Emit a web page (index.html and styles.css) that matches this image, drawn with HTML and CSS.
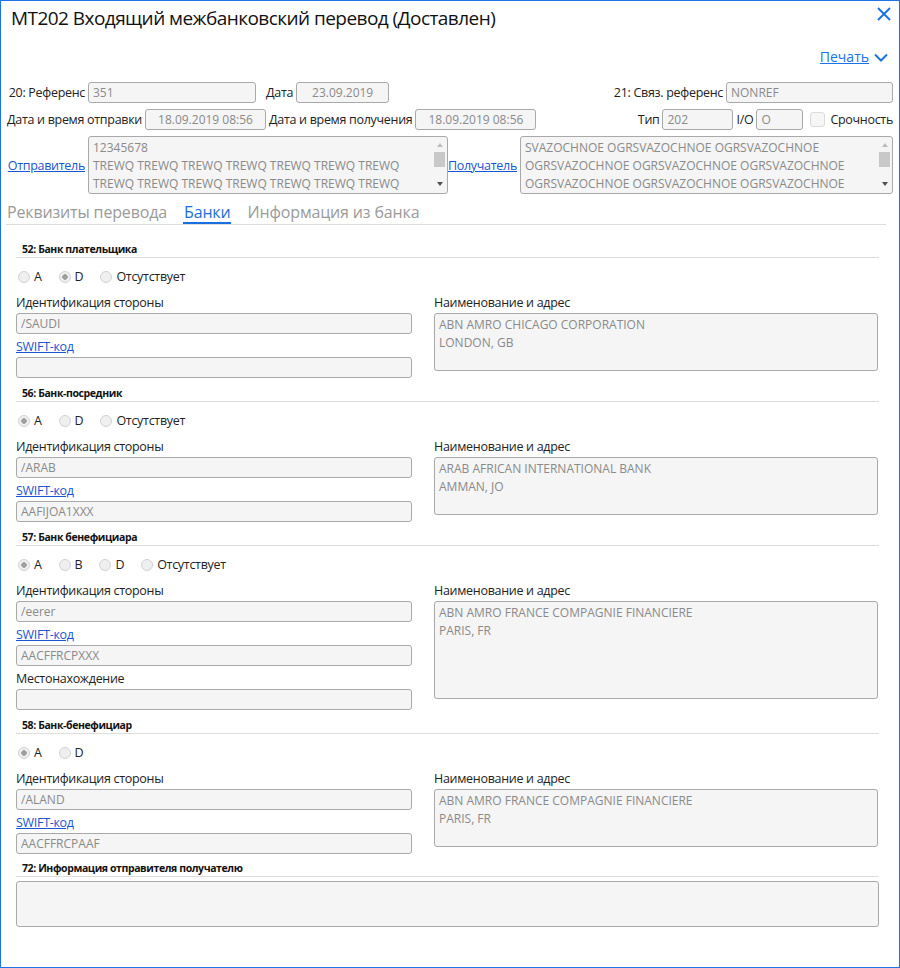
FILE: index.html
```html
<!DOCTYPE html>
<html lang="ru">
<head>
<meta charset="utf-8">
<title>MT202</title>
<link rel="stylesheet" href="styles.css">
</head>
<body>
<div class="window">
  <header class="titlebar">
    <h1 class="title">МТ202 Входящий межбанковский перевод (Доставлен)</h1>
    <button class="close" type="button" aria-label="Закрыть">
      <svg width="14" height="14" viewBox="0 0 14 14"><path d="M1 1 L13 13 M13 1 L1 13" stroke="#1a73e8" stroke-width="2" fill="none"/></svg>
    </button>
  </header>

  <div class="print-row">
    <a class="print-link" href="#">Печать</a>
    <svg class="chevron" width="14" height="9" viewBox="0 0 14 9"><path d="M1 1.5 L7 7.5 L13 1.5" stroke="#1a73e8" stroke-width="2" fill="none"/></svg>
  </div>

  <div class="meta">
    <div class="meta-row">
      <div class="group">
        <span class="lbl lbl-col">20: Референс</span>
        <input class="inp w-ref" value="351" disabled>
        <span class="lbl lbl-gap">Дата</span>
        <input class="inp center w-date" value="23.09.2019" disabled>
      </div>
      <div class="group">
        <span class="lbl">21: Связ. референс</span>
        <input class="inp w-ref2" value="NONREF" disabled>
      </div>
    </div>
    <div class="meta-row">
      <div class="group">
        <span class="lbl">Дата и время отправки</span>
        <input class="inp center w-dt" value="18.09.2019 08:56" disabled>
        <span class="lbl">Дата и время получения</span>
        <input class="inp center w-dt" value="18.09.2019 08:56" disabled>
      </div>
      <div class="group">
        <span class="lbl">Тип</span>
        <input class="inp w-type" value="202" disabled>
        <span class="lbl">I/O</span>
        <input class="inp w-io" value="O" disabled>
        <label class="check"><input type="checkbox" disabled> Срочность</label>
      </div>
    </div>
    <div class="meta-row">
      <div class="group">
        <a class="link lbl-col" href="#">Отправитель</a>
        <div class="scrollbox w-sender">
          <div class="scroll-text">12345678
TREWQ TREWQ TREWQ TREWQ TREWQ TREWQ TREWQ
TREWQ TREWQ TREWQ TREWQ TREWQ TREWQ TREWQ</div>
          <div class="sbar">
            <span class="arrow-up"></span>
            <span class="thumb"></span>
            <span class="sbar-fill"></span>
            <span class="arrow-down"></span>
          </div>
        </div>
      </div>
      <div class="group">
        <a class="link" href="#">Получатель</a>
        <div class="scrollbox w-recv">
          <div class="scroll-text">SVAZOCHNOE OGRSVAZOCHNOE OGRSVAZOCHNOE
OGRSVAZOCHNOE OGRSVAZOCHNOE OGRSVAZOCHNOE
OGRSVAZOCHNOE OGRSVAZOCHNOE OGRSVAZOCHNOE</div>
          <div class="sbar">
            <span class="arrow-up"></span>
            <span class="thumb"></span>
            <span class="sbar-fill"></span>
            <span class="arrow-down"></span>
          </div>
        </div>
      </div>
    </div>
  </div>

  <nav class="tabs">
    <a class="tab" href="#">Реквизиты перевода</a>
    <a class="tab active" href="#">Банки</a>
    <a class="tab" href="#">Информация из банка</a>
  </nav>

  <main class="content">
    <section class="block">
      <div class="block-head">52: Банк плательщика</div>
      <div class="radios">
        <label class="radio"><input type="radio" name="r52" disabled>A</label>
        <label class="radio"><input type="radio" name="r52" checked disabled>D</label>
        <label class="radio"><input type="radio" name="r52" disabled>Отсутствует</label>
      </div>
      <div class="block-body">
        <div class="col">
          <div class="field">
            <div class="field-label">Идентификация стороны</div>
            <input class="inp full" value="/SAUDI" disabled>
          </div>
          <div class="field">
            <a class="field-link" href="#">SWIFT-код</a>
            <input class="inp full" value="" disabled>
          </div>
        </div>
        <div class="col">
          <div class="field">
            <div class="field-label">Наименование и адрес</div>
            <textarea class="ta full h58" disabled>ABN AMRO CHICAGO CORPORATION
LONDON, GB</textarea>
          </div>
        </div>
      </div>
    </section>

    <section class="block">
      <div class="block-head">56: Банк-посредник</div>
      <div class="radios">
        <label class="radio"><input type="radio" name="r56" checked disabled>A</label>
        <label class="radio"><input type="radio" name="r56" disabled>D</label>
        <label class="radio"><input type="radio" name="r56" disabled>Отсутствует</label>
      </div>
      <div class="block-body">
        <div class="col">
          <div class="field">
            <div class="field-label">Идентификация стороны</div>
            <input class="inp full" value="/ARAB" disabled>
          </div>
          <div class="field">
            <a class="field-link" href="#">SWIFT-код</a>
            <input class="inp full" value="AAFIJOA1XXX" disabled>
          </div>
        </div>
        <div class="col">
          <div class="field">
            <div class="field-label">Наименование и адрес</div>
            <textarea class="ta full h58" disabled>ARAB AFRICAN INTERNATIONAL BANK
AMMAN, JO</textarea>
          </div>
        </div>
      </div>
    </section>

    <section class="block">
      <div class="block-head">57: Банк бенефициара</div>
      <div class="radios">
        <label class="radio"><input type="radio" name="r57" checked disabled>A</label>
        <label class="radio"><input type="radio" name="r57" disabled>B</label>
        <label class="radio"><input type="radio" name="r57" disabled>D</label>
        <label class="radio"><input type="radio" name="r57" disabled>Отсутствует</label>
      </div>
      <div class="block-body">
        <div class="col">
          <div class="field">
            <div class="field-label">Идентификация стороны</div>
            <input class="inp full" value="/eerer" disabled>
          </div>
          <div class="field">
            <a class="field-link" href="#">SWIFT-код</a>
            <input class="inp full" value="AACFFRCPXXX" disabled>
          </div>
          <div class="field">
            <div class="field-label">Местонахождение</div>
            <input class="inp full" value="" disabled>
          </div>
        </div>
        <div class="col">
          <div class="field">
            <div class="field-label">Наименование и адрес</div>
            <textarea class="ta full h98" disabled>ABN AMRO FRANCE COMPAGNIE FINANCIERE
PARIS, FR</textarea>
          </div>
        </div>
      </div>
    </section>

    <section class="block block-tight">
      <div class="block-head">58: Банк-бенефициар</div>
      <div class="radios">
        <label class="radio"><input type="radio" name="r58" checked disabled>A</label>
        <label class="radio"><input type="radio" name="r58" disabled>D</label>
      </div>
      <div class="block-body">
        <div class="col">
          <div class="field">
            <div class="field-label">Идентификация стороны</div>
            <input class="inp full" value="/ALAND" disabled>
          </div>
          <div class="field">
            <a class="field-link" href="#">SWIFT-код</a>
            <input class="inp full" value="AACFFRCPAAF" disabled>
          </div>
        </div>
        <div class="col">
          <div class="field">
            <div class="field-label">Наименование и адрес</div>
            <textarea class="ta full h58" disabled>ABN AMRO FRANCE COMPAGNIE FINANCIERE
PARIS, FR</textarea>
          </div>
        </div>
      </div>
    </section>

    <section class="block">
      <div class="block-head">72: Информация отправителя получателю</div>
      <textarea class="ta full h46 info" disabled></textarea>
    </section>
  </main>
</div>
</body>
</html>
```

FILE: styles.css
```css
* { box-sizing: border-box; }

html, body {
  margin: 0;
  padding: 0;
  background: #ffffff;
}

body {
  font-family: "Open Sans", "Noto Sans", sans-serif;
  font-size: 12.5px;
  letter-spacing: -0.3px;
  color: #222;
}

.window {
  width: 900px;
  height: 968px;
  border: 1px solid #1a73e8;
  overflow: hidden;
}

/* header */
.titlebar {
  display: flex;
  justify-content: space-between;
  align-items: flex-start;
  height: 46px;
  padding: 5px 8px 0 10px;
}

.title {
  margin: 0;
  font-size: 19px;
  letter-spacing: -0.55px;
  font-weight: 400;
  line-height: 24px;
  color: #111;
}

.close {
  border: 0;
  background: none;
  padding: 0;
  margin-top: 1px;
  width: 14px;
  height: 14px;
  display: block;
  cursor: pointer;
}
.close svg { display: block; }

.print-row {
  display: flex;
  justify-content: flex-end;
  align-items: center;
  gap: 5px;
  height: 20px;
  padding-right: 11px;
}

.print-link {
  color: #1a73e8;
  font-size: 14px;
  letter-spacing: 0;
  line-height: 20px;
  text-decoration: underline;
}
.chevron { display: block; }

/* meta form */
.meta {
  display: flex;
  flex-direction: column;
  gap: 6px;
  padding: 0 6px;
  margin-top: 15px;
}

.meta-row {
  display: flex;
  justify-content: space-between;
  align-items: center;
}

.group {
  display: flex;
  align-items: center;
  gap: 3px;
}

.lbl {
  white-space: nowrap;
  line-height: 16px;
}

.lbl-col {
  width: 78px;
  text-align: right;
}

.lbl-gap { margin-left: 7px; }

.inp {
  height: 21px;
  border: 1px solid #a9a9a9;
  border-radius: 3px;
  background: #f5f5f5;
  color: #8a8a8a;
  font-family: "Open Sans", "Noto Sans", sans-serif;
  font-size: 12px;
  letter-spacing: 0;
  padding: 0 4px;
  margin: 0;
  opacity: 1;
}
.inp.center { text-align: center; }

.w-ref { width: 168px; }
.w-date { width: 93px; }
.w-ref2 { width: 167px; }
.w-dt { width: 121px; }
.w-type { width: 71px; }
.w-io { width: 47px; }

.check {
  display: inline-flex;
  align-items: center;
  gap: 5px;
  margin-left: 4px;
  white-space: nowrap;
}
.check input {
  appearance: none;
  -webkit-appearance: none;
  width: 15px;
  height: 15px;
  margin: 0;
  border: 1px solid #dcdcdc;
  border-radius: 3px;
  background: #f6f6f6;
}

.link {
  color: #1a55d6;
  text-decoration: underline;
  white-space: nowrap;
}

/* sender / receiver boxes with scrollbar */
.scrollbox {
  display: flex;
  height: 58px;
  border: 1px solid #a9a9a9;
  border-radius: 3px;
  background: #f5f5f5;
  overflow: hidden;
}

.scroll-text {
  flex: 1;
  white-space: pre;
  overflow: hidden;
  padding: 2px 4px;
  color: #8a8a8a;
  font-size: 12px;
  letter-spacing: 0;
  line-height: 18px;
}

.sbar {
  width: 15px;
  display: flex;
  flex-direction: column;
  align-items: center;
  padding: 6px 0 7px;
}

.arrow-up {
  width: 0;
  height: 0;
  border-left: 3.5px solid transparent;
  border-right: 3.5px solid transparent;
  border-bottom: 4px solid #bdbdbd;
}

.thumb {
  width: 11px;
  height: 15px;
  margin-top: 5px;
  background: #c8c8c8;
}

.sbar-fill { flex: 1; }

.arrow-down {
  width: 0;
  height: 0;
  border-left: 3.5px solid transparent;
  border-right: 3.5px solid transparent;
  border-top: 4px solid #505050;
}

.w-sender { width: 360px; }
.w-recv { width: 373px; }

.ta {
  border: 1px solid #a9a9a9;
  border-radius: 3px;
  background: #f5f5f5;
  color: #8a8a8a;
  font-family: "Open Sans", "Noto Sans", sans-serif;
  font-size: 12px;
  letter-spacing: 0;
  line-height: 18px;
  padding: 2px 4px;
  margin: 0;
  resize: none;
  display: block;
  opacity: 1;
  overflow: hidden;
}

/* tabs */
.tabs {
  display: flex;
  gap: 16px;
  margin: 8px 0 0 5px;
  width: 880px;
  border-bottom: 1px solid #dddddd;
}

.tab {
  font-size: 16px;
  letter-spacing: -0.15px;
  line-height: 20px;
  color: #9a9a9a;
  text-decoration: none;
  border-bottom: 2px solid transparent;
  padding-left: 1px;
}

.tab.active {
  color: #1a6fe0;
  border-bottom-color: #1a6fe0;
}

/* content */
.content {
  padding: 17px 0 0 15px;
  width: 878px;
}

.block { margin-bottom: 8px; }
.block-tight { margin-bottom: 7px; }

.block-head {
  font-size: 10.5px;
  font-weight: 700;
  line-height: 14px;
  color: #111;
  padding: 0 6px 1px;
  border-bottom: 1px solid #dedede;
  letter-spacing: -0.4px;
}

.radios {
  display: flex;
  align-items: center;
  height: 20px;
  margin-top: 9px;
  padding-left: 2px;
}

.radio {
  display: inline-flex;
  align-items: center;
  gap: 4px;
  margin-right: 17px;
  line-height: 20px;
}

.radio input {
  appearance: none;
  -webkit-appearance: none;
  width: 12px;
  height: 12px;
  margin: 0;
  border: 1px solid #d2d2d2;
  border-radius: 50%;
  background: #efefef;
}

.radio input:checked {
  background: radial-gradient(circle, #9e9e9e 0 2.5px, #efefef 3px);
}

.block-body {
  display: grid;
  grid-template-columns: 396px 444px;
  column-gap: 22px;
  margin-top: 8px;
}

.col {
  display: flex;
  flex-direction: column;
  gap: 5px;
}

.field {
  display: flex;
  flex-direction: column;
  gap: 2px;
}

.field-label {
  line-height: 16px;
  color: #222;
}

.field-link {
  line-height: 16px;
  color: #1a55d6;
  text-decoration: underline;
  align-self: flex-start;
}

.full { width: 100%; }
.h58 { height: 58px; }
.h98 { height: 98px; }
.h46 { height: 46px; }

.info { margin-top: 4px; }
```
